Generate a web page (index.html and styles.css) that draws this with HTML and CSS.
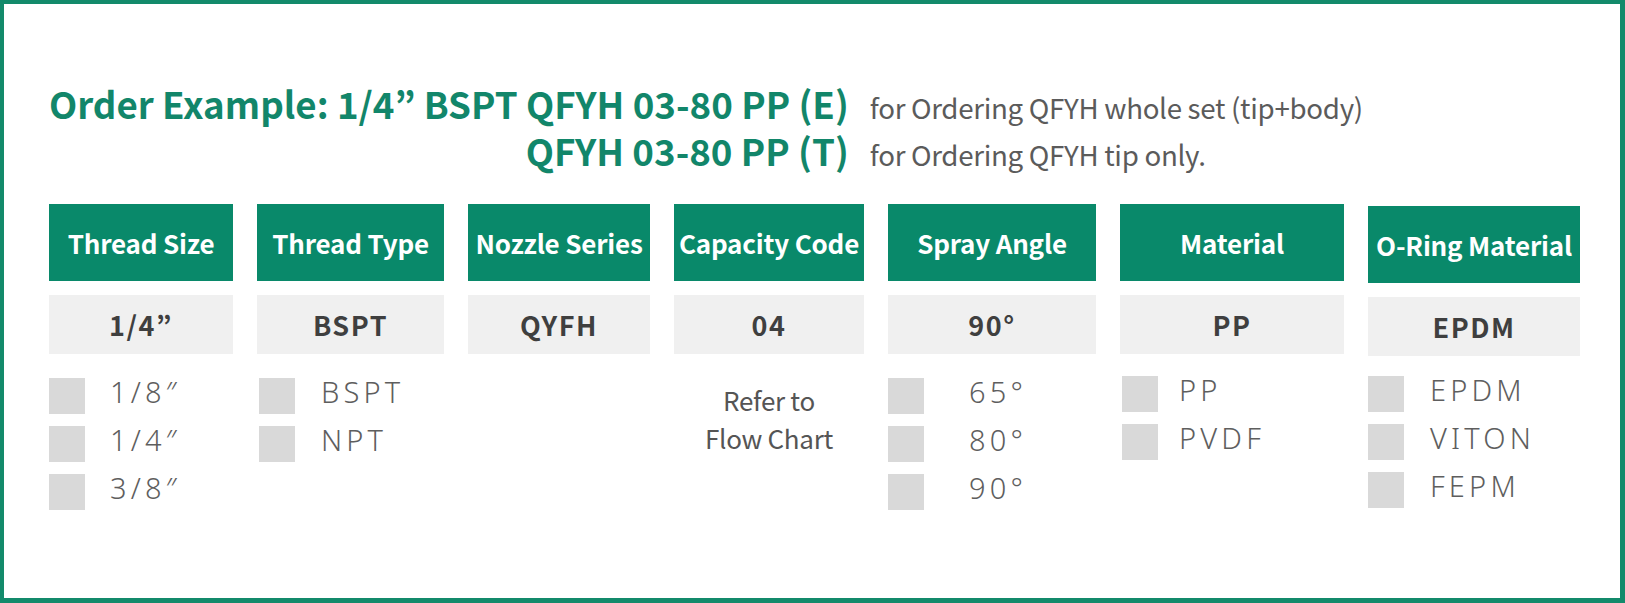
FILE: index.html
```html
<!DOCTYPE html>
<html lang="en">
<head>
<meta charset="utf-8">
<title>QFYH Order Example</title>
<link rel="stylesheet" href="styles.css">
</head>
<body>
<div class="frame">
  <div class="order">
    <div class="order__code">Order Example: 1/4” BSPT QFYH 03-80 PP (E)</div>
    <div class="order__note">for Ordering QFYH whole set (tip+body)</div>
    <div class="order__code">QFYH 03-80 PP (T)</div>
    <div class="order__note">for Ordering QFYH tip only.</div>
  </div>

  <div class="table">
    <div class="col col--size">
      <div class="col__head">Thread Size</div>
      <div class="col__value">1/4”</div>
      <ul class="opts">
        <li class="opt"><span class="box"></span><span class="opt__label">1/8″</span></li>
        <li class="opt"><span class="box"></span><span class="opt__label">1/4″</span></li>
        <li class="opt"><span class="box"></span><span class="opt__label">3/8″</span></li>
      </ul>
    </div>
    <div class="col col--type">
      <div class="col__head">Thread Type</div>
      <div class="col__value">BSPT</div>
      <ul class="opts">
        <li class="opt"><span class="box"></span><span class="opt__label">BSPT</span></li>
        <li class="opt"><span class="box"></span><span class="opt__label">NPT</span></li>
      </ul>
    </div>
    <div class="col">
      <div class="col__head">Nozzle Series</div>
      <div class="col__value">QYFH</div>
    </div>
    <div class="col">
      <div class="col__head">Capacity Code</div>
      <div class="col__value">04</div>
      <p class="col__refer">Refer to<br>Flow Chart</p>
    </div>
    <div class="col col--angle">
      <div class="col__head">Spray Angle</div>
      <div class="col__value">90°</div>
      <ul class="opts">
        <li class="opt"><span class="box"></span><span class="opt__label">65°</span></li>
        <li class="opt"><span class="box"></span><span class="opt__label">80°</span></li>
        <li class="opt"><span class="box"></span><span class="opt__label">90°</span></li>
      </ul>
    </div>
    <div class="col col--material">
      <div class="col__head">Material</div>
      <div class="col__value">PP</div>
      <ul class="opts">
        <li class="opt"><span class="box"></span><span class="opt__label">PP</span></li>
        <li class="opt"><span class="box"></span><span class="opt__label">PVDF</span></li>
      </ul>
    </div>
    <div class="col col--oring">
      <div class="col__head">O-Ring Material</div>
      <div class="col__value">EPDM</div>
      <ul class="opts">
        <li class="opt"><span class="box"></span><span class="opt__label">EPDM</span></li>
        <li class="opt"><span class="box"></span><span class="opt__label">VITON</span></li>
        <li class="opt"><span class="box"></span><span class="opt__label">FEPM</span></li>
      </ul>
    </div>
  </div>
</div>
</body>
</html>
```

FILE: styles.css
```css
* { box-sizing: border-box; }

html, body {
  margin: 0;
  padding: 0;
  background: #ffffff;
}

body {
  font-family: "Noto Sans CJK KR", "Noto Sans", sans-serif;
}

.frame {
  width: 1625px;
  height: 603px;
  border: 4px solid #138a6b;
  border-right-width: 5px;
  border-bottom-width: 5px;
  padding: 79px 0 0 45px;
}

.order {
  display: grid;
  grid-template-columns: auto auto;
  grid-auto-rows: 47px;
  column-gap: 21px;
  justify-content: start;
  align-items: baseline;
}

.order__code {
  justify-self: end;
  color: #12866a;
  font-size: 36.7px;
  font-weight: 600;
  line-height: 40px;
}

.order__note {
  color: #5b5b5b;
  font-size: 27.7px;
  font-weight: 400;
  line-height: 36px;
  letter-spacing: -0.3px;
}

.table {
  display: grid;
  grid-template-columns: 184px 187px 182px 190px 208px 224px 212px;
  column-gap: 24px;
  margin-top: 27px;
  align-items: start;
}

.col {
  display: flex;
  flex-direction: column;
  --label-gap: 24px;
}

.col__head {
  height: 77px;
  display: flex;
  align-items: center;
  justify-content: center;
  background: #09896a;
  color: #ffffff;
  font-size: 26px;
  font-weight: 600;
  white-space: nowrap;
  letter-spacing: -0.2px;
}

.col__value {
  height: 59px;
  margin-top: 14px;
  display: flex;
  align-items: center;
  justify-content: center;
  background: #f0f0f0;
  color: #3f3f3f;
  font-size: 27px;
  font-weight: 700;
  letter-spacing: 1.5px;
}

.col__refer {
  margin: 27px 0 0;
  text-align: center;
  color: #555555;
  font-size: 26px;
  line-height: 38px;
  letter-spacing: -0.3px;
}

.opts {
  list-style: none;
  margin: 24px 0 0;
  padding: 0;
  display: flex;
  flex-direction: column;
  gap: 12px;
}

.opt {
  display: flex;
  align-items: flex-start;
  height: 36px;
}

.box {
  width: 36px;
  height: 36px;
  flex: none;
  background: #d9d9d9;
}

.opt__label {
  margin-left: var(--label-gap);
  color: #5e5e5e;
  font-family: "Noto Sans", "Open Sans", sans-serif;
  font-size: 29px;
  font-weight: 300;
  letter-spacing: 4.2px;
  line-height: 28px;
}

.col--size { --label-gap: 25px; }
.col--type { --label-gap: 26px; }
.col--type .opts { padding-left: 2px; }
.col--angle { --label-gap: 45px; }
.col--material { --label-gap: 21px; }
.col--material .opts { padding-left: 2px; margin-top: 22px; }
.col--oring { --label-gap: 26px; }
.col--oring .col__head { margin-top: 2px; }
.col--oring .opts { margin-top: 20px; }
```
